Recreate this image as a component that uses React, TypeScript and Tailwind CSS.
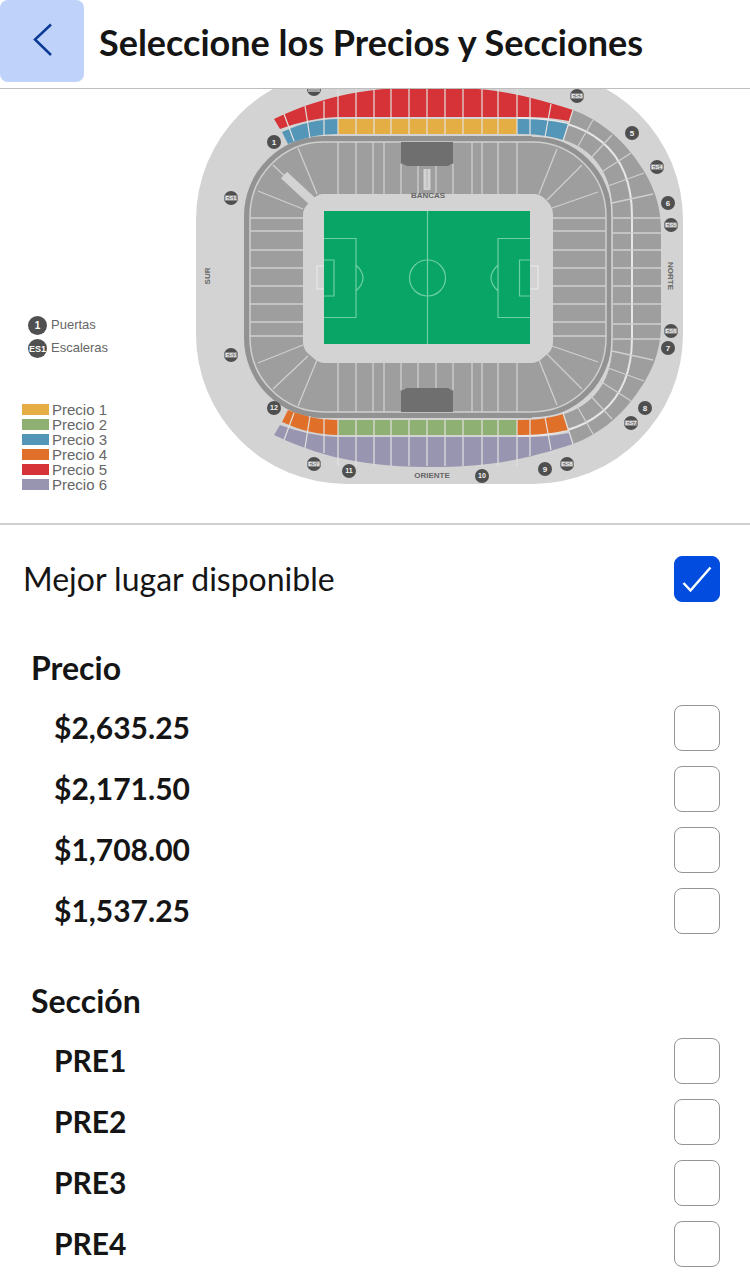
import React from "react";

type Badge = { x: number; y: number; label: string };

const PRICE_LEGEND = [
  { label: "Precio 1", swatch: "bg-[#e5ae45]" },
  { label: "Precio 2", swatch: "bg-[#8eb073]" },
  { label: "Precio 3", swatch: "bg-[#5496b8]" },
  { label: "Precio 4", swatch: "bg-[#e07029]" },
  { label: "Precio 5", swatch: "bg-[#d63338]" },
  { label: "Precio 6", swatch: "bg-[#9795b0]" },
];

const PRICES = ["$2,635.25", "$2,171.50", "$1,708.00", "$1,537.25"];
const SECTIONS = ["PRE1", "PRE2", "PRE3", "PRE4"];

const GATES: Badge[] = [
  { x: 274, y: 142, label: "1" },
  { x: 632, y: 133, label: "5" },
  { x: 668, y: 203, label: "6" },
  { x: 668, y: 348, label: "7" },
  { x: 645, y: 408, label: "8" },
  { x: 545, y: 469, label: "9" },
  { x: 482, y: 476, label: "10" },
  { x: 349, y: 471, label: "11" },
  { x: 274, y: 408, label: "12" },
];

const STAIRS: Badge[] = [
  { x: 577, y: 96, label: "ES3" },
  { x: 657, y: 167, label: "ES4" },
  { x: 671, y: 225, label: "ES5" },
  { x: 671, y: 331, label: "ES6" },
  { x: 631, y: 423, label: "ES7" },
  { x: 567, y: 464, label: "ES8" },
  { x: 314, y: 464, label: "ES9" },
  { x: 231, y: 355, label: "ES1" },
  { x: 231, y: 198, label: "ES1" },
];

const STAND_COLUMNS = [338, 356, 374, 391, 409, 427, 445, 463, 482, 498, 517];
const BOWL_COLUMNS = [338, 356, 373, 384, 401, 453, 472, 482, 498, 517];
const BOWL_ROWS = [218, 231, 250, 268, 286, 304, 322, 336];
const RING_ROWS = [218, 233, 250, 268, 286, 304, 324, 339];

/* Upper half of the stands; the lower half is the same drawing mirrored. */
function StandHalf({ outer, middle, corner }: { outer: string; middle: string; corner: string }) {
  return (
    <g>
      <path
        d="M274 119 C306 104 350 87 427 87 C494 87 526 95 573 110 L569 121 C548 117 535 117 517 117 L338 117 C315 118 300 122 280 129 Z"
        fill={outer}
      />
      <path d="M282 132 C300 124 318 119 338 119 L338 134 C318 134 304 138 288 144 Z" fill={corner} />
      <path d="M338 119 H517 V134 H338 Z" fill={middle} />
      <path d="M517 119 C535 119 550 120 568 124 L563 140 C547 135 534 134 517 134 Z" fill={corner} />
      <g stroke="#e3e1df" strokeWidth="1.2" fill="none">
        {STAND_COLUMNS.map((x) => (
          <path key={x} d={`M${x} 88 V134`} />
        ))}
        <path d="M284 114 L294 141 M305 106 L310 138 M324 101 V136 M530 98 V135 M551 104 L545 137" />
        <path d="M573 110 L563 141" />
      </g>
      <path d="M401 142 H453 V163 L448 166 H407 L401 163 Z" fill="#6f6f6f" />
      <g stroke="#cfcfcf" strokeWidth="1.3" fill="none">
        {BOWL_COLUMNS.map((x) => (
          <path key={x} d={`M${x} ${x === 401 || x === 453 ? 164 : 142} V194`} />
        ))}
        <path d="M418 166 V194 M436 166 V194" />
        <path d="M298 148 L317 194 M258 191 L303 209 M273 165 L308 198" />
        <path d="M557 149 L539 194 M582 165 L547 200 M598 192 L552 208" />
        <path d="M593 120 L577 148 M612 135 L590 159 M631 153 L600 173 M644 173 L608 186 M653 194 L612 203" />
      </g>
    </g>
  );
}

function StadiumMap() {
  return (
    <svg
      viewBox="190 89 500 434"
      className="mr-15 block w-2/3 shrink-0"
      role="img"
      aria-label="Mapa del estadio"
      fontFamily="'Liberation Sans', Arial, sans-serif"
    >
      <rect x="196" y="70" width="487" height="414" rx="150" fill="#d3d3d3" />

      {/* North ring */}
      <path
        d="M573 110 C598 119 618 136 632 154 C650 177 661 200 661 230 V324 C661 354 650 377 632 400 C618 418 598 435 573 444 L563 414 C593 405 612 382 612 345 V210 C612 174 593 151 563 141 Z"
        fill="#9e9e9e"
      />
      <path
        d="M517 118 C590 117 632 150 632 216 V338 C632 404 590 437 517 436"
        fill="none"
        stroke="#e6e6e6"
        strokeWidth="2"
      />

      {/* Lower bowl */}
      <rect x="244" y="136" width="368" height="282" rx="80" fill="#929292" />
      <path
        d="M532 136 C585 137 612 166 612 216 V338 C612 388 585 417 532 418"
        fill="none"
        stroke="#d6d6d6"
        strokeWidth="1.5"
      />
      <rect x="250" y="142" width="356" height="270" rx="74" fill="#9e9e9e" stroke="#cfcfcf" strokeWidth="1.5" />
      <path
        d="M322 194 H534 Q540 194 545 199 Q553 206 553 214 V343 Q553 350 545 356 Q538 363 532 363 H324 Q318 363 311 356 Q303 350 303 343 V214 Q303 208 310 202 Q317 194 322 194 Z"
        fill="#d3d3d3"
      />

      <StandHalf outer="#d63338" middle="#e5ae45" corner="#5496b8" />
      <g transform="translate(0 554) scale(1 -1)">
        <StandHalf outer="#9795b0" middle="#8eb073" corner="#e07029" />
      </g>

      <g stroke="#cfcfcf" strokeWidth="1.3">
        {BOWL_ROWS.map((y) => (
          <path key={y} d={`M250 ${y} H303 M553 ${y} H606`} />
        ))}
        {RING_ROWS.map((y) => (
          <path key={y} d={`M613 ${y} H661`} />
        ))}
      </g>
      <path d="M284 175 L312 201" stroke="#d3d3d3" strokeWidth="9" />
      <path d="M427 169 V190" stroke="#d3d3d3" strokeWidth="7" />
      <path d="M427 169 V188" stroke="#b5b5b5" strokeWidth="1" />

      {/* Pitch */}
      <rect x="324" y="211" width="206" height="133" fill="#08a566" />
      <g fill="none" stroke="#6dd0a4" strokeWidth="1.2">
        <path d="M427.5 211 V344" />
        <circle cx="427.5" cy="278" r="18" />
        <path d="M324 238.5 H356 V317.5 H324 M324 260 H334 V296 H324 M356 265 Q370 278 356 291" />
        <path d="M530 238.5 H498 V317.5 H530 M530 260 H519.5 V296 H530 M498 265 Q484 278 498 291" />
      </g>
      <g fill="none" stroke="#e4e4e4" strokeWidth="1.5">
        <path d="M324 266 H317 V289 H324 M530 266 H538 V289 H530" />
      </g>

      {/* Staircase cut by the top edge of the map */}
      <circle cx="314" cy="89" r="7" fill="#4f4f4f" />
      <rect x="308" y="87" width="12" height="5" fill="#a3a3a3" />

      {[...GATES, ...STAIRS].map(({ x, y, label }) => (
        <g key={`${x}-${y}`}>
          <circle cx={x} cy={y} r="7" fill="#4f4f4f" />
          {label.startsWith("ES") && <rect x={x - 7} y={y - 3} width="14" height="6" fill="#858585" />}
          <text
            x={x}
            y={label.length === 1 ? y + 3 : y + 2}
            textAnchor="middle"
            fontSize={label.length === 1 ? 8 : label.length === 2 ? 7 : 6}
            fontWeight="700"
            fill="#f2f2f2"
          >
            {label}
          </text>
        </g>
      ))}

      <g fontSize="8" fontWeight="700" fill="#666666" textAnchor="middle">
        <text x="428" y="198">BANCAS</text>
        <text x="432" y="478">ORIENTE</text>
        <text transform="translate(210 276) rotate(-90)">SUR</text>
        <text transform="translate(668 276) rotate(90)">NORTE</text>
      </g>
    </svg>
  );
}

function MapLegend() {
  return (
    <div className="flex grow flex-col pt-[226px] pl-[22px] font-['Liberation_Sans',Arial,sans-serif] text-[#666666]">
      <ul className="flex flex-col gap-[3px] pl-1.5 text-[13px] leading-5">
        <li className="flex items-center gap-1">
          <span className="grid size-[19px] place-items-center rounded-full bg-[#505050] text-[10px] font-bold text-white">
            1
          </span>
          Puertas
        </li>
        <li className="flex items-center gap-1">
          <span className="grid size-[19px] place-items-center rounded-full bg-[#505050] text-[9px] font-bold text-white">
            ES1
          </span>
          Escaleras
        </li>
      </ul>
      <ul className="mt-11 text-[15px] leading-[15px]">
        {PRICE_LEGEND.map(({ label, swatch }) => (
          <li key={label} className="flex items-center gap-[3px]">
            <span className={`h-[11px] w-[27px] ${swatch}`} />
            {label}
          </li>
        ))}
      </ul>
    </div>
  );
}

function CheckBox({ id, defaultChecked = false }: { id: string; defaultChecked?: boolean }) {
  return (
    <span className="grid shrink-0">
      <input
        id={id}
        type="checkbox"
        defaultChecked={defaultChecked}
        className="peer col-start-1 row-start-1 size-[46px] cursor-pointer appearance-none rounded-lg border border-[#959595] bg-white checked:border-[#024ddf] checked:bg-[#024ddf]"
      />
      <svg
        viewBox="0 0 46 46"
        aria-hidden="true"
        className="pointer-events-none invisible col-start-1 row-start-1 size-[46px] peer-checked:visible"
      >
        <path d="M9.5 27 L16.5 34.5 L36.5 11.5" fill="none" stroke="#ffffff" strokeWidth="2.5" />
      </svg>
    </span>
  );
}

function OptionGroup({ title, options }: { title: string; options: string[] }) {
  return (
    <fieldset>
      <legend className="flex h-[57px] items-center pb-0.5 pl-[31px] text-[32px] leading-9 font-bold">{title}</legend>
      {options.map((option) => (
        <div key={option} className="flex h-[61px] items-center justify-between pr-[30px] pl-[54px]">
          <label htmlFor={option} className="grow cursor-pointer pb-0.5 text-[30px] leading-9 font-bold">
            {option}
          </label>
          <CheckBox id={option} />
        </div>
      ))}
    </fieldset>
  );
}

export default function App() {
  return (
    <div className="min-h-screen bg-white font-['Lato',sans-serif] text-[#151515]">
      <header className="flex h-[89px] items-start border-b border-[#bdbdbd]">
        <button
          type="button"
          aria-label="Volver"
          className="grid h-[82px] w-[84px] shrink-0 place-items-center rounded-lg bg-[#bfd2fa]"
        >
          <svg viewBox="0 0 84 82" className="h-[82px] w-[84px]" aria-hidden="true">
            <path d="M51 24.5 L35 39.5 L51 55" fill="none" stroke="#0b3a96" strokeWidth="2.5" />
          </svg>
        </button>
        <h1 className="flex h-[84px] items-center pl-[15px] text-[36px] leading-10 font-bold">
          Seleccione los Precios y Secciones
        </h1>
      </header>

      <main>
        <section className="flex items-start border-b-2 border-[#d0d0d0]">
          <MapLegend />
          <StadiumMap />
        </section>

        <form>
          <div className="flex h-[108px] items-center justify-between pr-[30px] pl-[23px]">
            <label htmlFor="best-available" className="grow cursor-pointer text-[32px] leading-9">
              Mejor lugar disponible
            </label>
            <CheckBox id="best-available" defaultChecked />
          </div>
          <div className="flex flex-col gap-8 pt-[7px]">
            <OptionGroup title="Precio" options={PRICES} />
            <OptionGroup title="Sección" options={SECTIONS} />
          </div>
        </form>
      </main>
    </div>
  );
}
